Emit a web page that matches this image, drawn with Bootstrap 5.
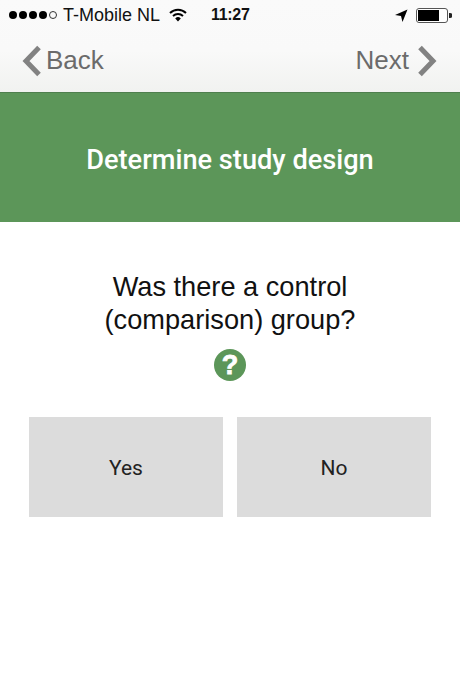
<!DOCTYPE html>
<html lang="en">
<head>
    <meta charset="UTF-8">
    <meta name="viewport" content="width=device-width, initial-scale=1">
    <title>Determine study design</title>
    <link href="https://cdn.jsdelivr.net/npm/bootstrap@5.3.0/dist/css/bootstrap.min.css" rel="stylesheet">
    <style>
        body {
            font-family: "Liberation Sans", Arial, sans-serif;
            background: #fff;
            overflow: hidden;
        }
        .top-area {
            height: 93px;
            background: linear-gradient(#fafafa, #f9f9f9 55%, #f1f2f0);
            border-bottom: 1px solid #4f7f4e;
        }
        .status-bar {
            height: 30px;
            font-size: 18px;
            color: #111;
            padding: 0 8px 0 9px;
        }
        .signal-dot {
            width: 8px;
            height: 8px;
            border-radius: 50%;
            background: #000;
            margin-right: 2px;
        }
        .signal-dot.empty {
            background: none;
            border: 1px solid #333;
        }
        .carrier { margin-left: 4px; }
        .wifi-icon { margin-left: 9px; }
        .clock {
            margin-left: 24px;
            font-weight: 700;
            font-size: 16px;
            letter-spacing: -.3px;
        }
        .nav-row {
            height: 62px;
            padding: 0 23px 2px 22px;
            color: #6b6b6b;
            font-size: 26px;
        }
        .nav-row svg { margin-bottom: -2px; }
        .design-banner {
            height: 129px;
            padding-top: 5px;
            background: #5c9659;
            color: #fff;
            font-family: Roboto, sans-serif;
            font-weight: 500;
            font-size: 27.2px;
        }
        .question-text {
            font-size: 27.2px;
            line-height: 33px;
            color: #111;
            margin-top: 48px;
        }
        .help-icon { margin-top: 13px; height: 32px; }
        .answer-row {
            margin-top: 36px;
            padding: 0 29px;
            gap: 14px;
        }
        .answer-btn {
            flex: 1 1 0;
            height: 100px;
            padding-top: 9px;
            background: #dcdcdc;
            border: 0;
            border-radius: 0;
            color: #222;
            font-family: Roboto, sans-serif;
            font-size: 21px;
        }
    </style>
</head>
<body>
    <div class="top-area">
        <div class="status-bar d-flex align-items-center">
            <span class="signal-dot"></span>
            <span class="signal-dot"></span>
            <span class="signal-dot"></span>
            <span class="signal-dot"></span>
            <span class="signal-dot empty"></span>
            <span class="carrier">T-Mobile NL</span>
            <svg class="wifi-icon" width="18" height="14" viewBox="0 0 18 14">
                <path d="M1 5 A11.5 11.5 0 0 1 17 5" fill="none" stroke="#000" stroke-width="2"/>
                <path d="M4 8 A7.5 7.5 0 0 1 14 8" fill="none" stroke="#000" stroke-width="2"/>
                <path d="M6.2 10.4 A4 4 0 0 1 11.8 10.4 L9 13.5 Z" fill="#000"/>
            </svg>
            <span class="clock">11:27</span>
            <svg class="ms-auto" width="13" height="13" viewBox="0 0 13 13">
                <path d="M12.5 .5 L0 6 L6 7 L7.5 13 Z" fill="#000"/>
            </svg>
            <svg class="ms-2" width="36" height="15" viewBox="0 0 36 15">
                <rect x=".5" y=".5" width="31" height="14" rx="2.5" fill="#fff" stroke="#555"/>
                <rect x="2" y="2" width="21" height="11" fill="#000"/>
                <path d="M33 5 h1 a2 2 0 0 1 0 5 h-1 Z" fill="#222"/>
            </svg>
        </div>
        <div class="nav-row d-flex align-items-center justify-content-between">
            <div class="d-flex align-items-center gap-1">
                <svg width="20" height="32" viewBox="0 0 20 32"><path d="M17 2.5 L4 16 L17 29.5" fill="none" stroke="#828282" stroke-width="5"/></svg>
                <span>Back</span>
            </div>
            <div class="d-flex align-items-center gap-2">
                <span>Next</span>
                <svg width="20" height="32" viewBox="0 0 20 32"><path d="M3 2.5 L16 16 L3 29.5" fill="none" stroke="#828282" stroke-width="5"/></svg>
            </div>
        </div>
    </div>

    <div class="design-banner d-flex align-items-center justify-content-center">Determine study design</div>

    <div class="question-text text-center">Was there a control<br>(comparison) group?</div>

    <div class="help-icon d-flex justify-content-center">
        <svg width="32" height="32" viewBox="0 0 32 32">
            <circle cx="16" cy="16" r="16" fill="#5c9659"/>
            <text x="16" y="25" text-anchor="middle" fill="#fff" stroke="#fff" stroke-width=".8" font-family="Liberation Sans" font-weight="700" font-size="27">?</text>
        </svg>
    </div>

    <div class="answer-row d-flex">
        <button class="btn answer-btn">Yes</button>
        <button class="btn answer-btn">No</button>
    </div>

    <script src="https://cdn.jsdelivr.net/npm/bootstrap@5.3.0/dist/js/bootstrap.bundle.min.js"></script>
</body>
</html>
